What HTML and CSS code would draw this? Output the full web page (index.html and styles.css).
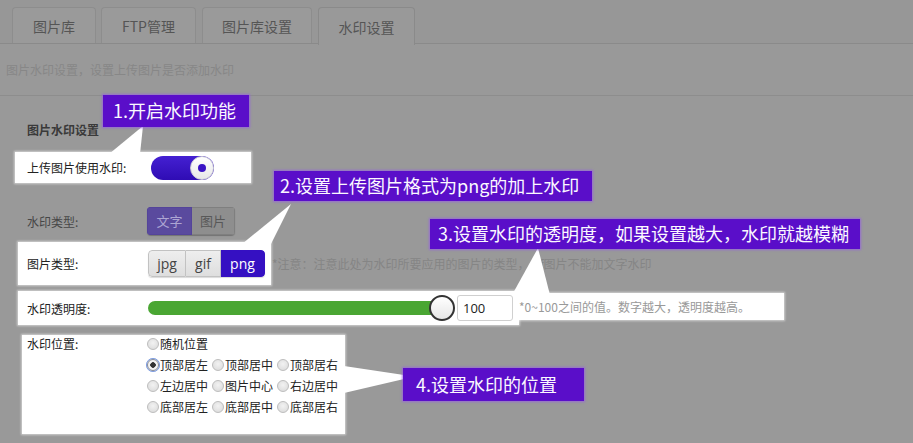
FILE: index.html
```html
<!DOCTYPE html>
<html lang="zh-CN">
<head>
<meta charset="utf-8">
<title>水印设置</title>
<link rel="stylesheet" href="styles.css">
</head>
<body>
<div class="tabs">
  <div class="tab t1">图片库</div>
  <div class="tab t2">FTP管理</div>
  <div class="tab t3">图片库设置</div>
  <div class="tab t4 active">水印设置</div>
</div>
<div class="desc">图片水印设置，设置上传图片是否添加水印</div>

<div class="form">
  <div class="title">图片水印设置</div>

  <div class="line l1">
    <div class="box hl">
      <div class="label">上传图片使用水印:</div>
      <div class="switch"><span class="knob"><span class="dot"></span></span></div>
    </div>
  </div>

  <div class="line l2">
    <div class="box">
      <div class="label dim">水印类型:</div>
      <div class="seg dimseg">
        <span class="sbtn on">文字</span><span class="sbtn">图片</span>
      </div>
    </div>
  </div>

  <div class="line l3">
    <div class="box hl">
      <div class="label">图片类型:</div>
      <div class="seg light">
        <span class="lbtn b-jpg">jpg</span><span class="lbtn b-gif">gif</span><span class="lbtn b-png on">png</span>
      </div>
    </div>
    <div class="note">*注意：注意此处为水印所要应用的图片的类型，gif图片不能加文字水印</div>
  </div>

  <div class="line l4">
    <div class="box hl">
      <div class="label">水印透明度:</div>
      <div class="slider"><span class="track"></span><span class="thumb"></span></div>
      <div class="num">100</div>
    </div>
    <div class="hint hl">*0~100之间的值。数字越大，透明度越高。</div>
  </div>

  <div class="line l5">
    <div class="box hl">
      <div class="label">水印位置:</div>
      <div class="radios">
        <div class="rrow"><span class="ritem"><i class="radio"></i>随机位置</span></div>
        <div class="rrow"><span class="ritem"><i class="radio checked"></i>顶部居左</span><span class="ritem"><i class="radio"></i>顶部居中</span><span class="ritem"><i class="radio"></i>顶部居右</span></div>
        <div class="rrow"><span class="ritem"><i class="radio"></i>左边居中</span><span class="ritem"><i class="radio"></i>图片中心</span><span class="ritem"><i class="radio"></i>右边居中</span></div>
        <div class="rrow"><span class="ritem"><i class="radio"></i>底部居左</span><span class="ritem"><i class="radio"></i>底部居中</span><span class="ritem"><i class="radio"></i>底部居右</span></div>
      </div>
    </div>
  </div>
</div>

<svg class="pointers" width="913" height="443" viewBox="0 0 913 443">
  <polygon points="143,126 109,154 140,154" fill="#fff"/>
  <polygon points="291,204 242,244 271,244" fill="#fff"/>
  <polygon points="538,248 512,295 550,295" fill="#fff"/>
  <polygon points="344,366 404,375 404,379 344,393" fill="#fff"/>
</svg>

<div class="callout c1">1.开启水印功能</div>
<div class="callout c2">2.设置上传图片格式为png的加上水印</div>
<div class="callout c3">3.设置水印的透明度，如果设置越大，水印就越模糊</div>
<div class="callout c4">4.设置水印的位置</div>
</body>
</html>
```

FILE: styles.css
```css
html, body {
  margin: 0;
  padding: 0;
}
body {
  position: relative;
  width: 913px;
  height: 443px;
  overflow: hidden;
  background: #999999;
  font-family: "Noto Sans CJK SC", "Microsoft YaHei", sans-serif;
  font-size: 12px;
  color: #222;
}

/* tabs */
.tabs {
  display: flex;
  align-items: flex-start;
  gap: 6px;
  padding: 7px 0 0 12px;
  height: 36px;
  background: #979797;
  border-bottom: 1px solid #8a8a8a;
}
.tab {
  box-sizing: border-box;
  height: 36px;
  border: 1px solid #8d8d8d;
  border-bottom: none;
  border-radius: 4px 4px 0 0;
  background: #9a9a9a;
  color: #555;
  font-size: 14px;
  display: flex;
  align-items: center;
  justify-content: center;
}
.t1 { width: 84px; }
.t2 { width: 95px; margin-left: -1px; }
.t3 { width: 110px; }
.t4 { width: 97px; }
.tab.active {
  height: 38px;
  margin-bottom: -1px;
  background: #999999;
  border-color: #8a8a8a;
}

.desc {
  height: 51px;
  line-height: 51px;
  padding-left: 6px;
  color: #878787;
  border-bottom: 1px solid #8d8d8d;
}

/* form */
.form {
  padding-top: 26px;
}
.title {
  padding-left: 27px;
  font-weight: bold;
  line-height: 16px;
  color: #3a3a3a;
}
.line {
  display: flex;
  align-items: center;
}
.box {
  --x: 15px;
  box-sizing: border-box;
  margin-left: var(--x);
  display: flex;
  align-items: center;
}
.hl {
  background: #fff;
  box-shadow: 0 0 2px 1px rgba(255, 255, 255, 0.55);
}
.label {
  box-sizing: border-box;
  width: calc(147px - var(--x));
  padding-left: calc(27px - var(--x));
  color: #222;
  white-space: nowrap;
}
.label.dim { color: #474747; }

/* row 1 */
.l1 { margin-top: 14px; }
.l1 .box { width: 236px; height: 31px; }
.switch {
  margin-left: 4px;
  width: 63px;
  height: 24px;
  border-radius: 12px;
  background: linear-gradient(to bottom, #4420d2, #2f0cb4);
  display: flex;
  justify-content: flex-end;
  align-items: center;
}
.knob {
  box-sizing: border-box;
  width: 24px;
  height: 24px;
  border-radius: 50%;
  background: linear-gradient(#ffffff, #e8e8e8);
  border: 1px solid #c9c9d4;
  display: flex;
  align-items: center;
  justify-content: center;
}
.dot {
  width: 8px;
  height: 8px;
  border-radius: 50%;
  background: #3a14c4;
}

/* row 2 */
.l2 { margin-top: 20px; }
.l2 .box { height: 36px; }
.seg {
  display: flex;
  border-radius: 4px;
  overflow: hidden;
}
.dimseg {
  box-shadow: 0 1px 1px rgba(0, 0, 0, 0.25);
}
.sbtn {
  box-sizing: border-box;
  height: 28px;
  line-height: 26px;
  text-align: center;
  font-size: 13px;
  border: 1px solid #7f7f7f;
  background: #8e8e8e;
  color: #585858;
}
.sbtn.on {
  width: 45px;
  background: #5a4a9e;
  border-color: #54449a;
  color: #ada5d3;
}
.sbtn:not(.on) { width: 43px; border-left: none; }

/* row 3 */
.l3 { margin-top: 3px; }
.l3 .box { --x: 18px; width: 253px; height: 43px; }
.light {
  margin-left: 1px;
  box-shadow: 0 1px 1px rgba(0, 0, 0, 0.15);
}
.lbtn {
  box-sizing: border-box;
  height: 27px;
  line-height: 25px;
  text-align: center;
  font-family: "Open Sans", "Noto Sans", sans-serif;
  font-size: 14px;
  color: #444;
  background: linear-gradient(#eeeeee, #dedede);
  border: 1px solid #c2c2c2;
}
.b-jpg { width: 38px; border-radius: 4px 0 0 4px; }
.b-gif { width: 35px; border-left: none; }
.b-png { width: 44px; border-left: none; border-radius: 0 4px 4px 0; }
.lbtn.on {
  background: #3510c2;
  border-color: #3510c2;
  color: #fff;
}
.note {
  margin-left: 1px;
  color: #858585;
  white-space: nowrap;
}

/* row 4 */
.l4 { margin-top: 6px; align-items: flex-start; }
.l4 .box { --x: 18px; width: 501px; height: 34px; }
.slider {
  position: relative;
  margin-left: 1px;
  width: 307px;
  height: 26px;
  display: flex;
  align-items: center;
}
.track {
  width: 297px;
  height: 14px;
  border-radius: 7px;
  background: #4aa633;
}
.thumb {
  position: absolute;
  right: 0;
  top: 0;
  box-sizing: border-box;
  width: 26px;
  height: 26px;
  border-radius: 50%;
  border: 2px solid #333;
  background: linear-gradient(#ffffff, #e6e6e6);
}
.num {
  box-sizing: border-box;
  margin-left: 2px;
  width: 56px;
  height: 26px;
  line-height: 24px;
  padding-left: 5px;
  border: 1px solid #cfcfcf;
  border-radius: 3px;
  font-family: "Open Sans", "Noto Sans", sans-serif;
  font-size: 13px;
  color: #222;
  background: #fff;
}
.hint {
  box-sizing: border-box;
  margin-top: 2px;
  margin-left: -4px;
  width: 269px;
  height: 27px;
  line-height: 27px;
  padding-left: 4px;
  color: #999;
  font-size: 12px;
  white-space: nowrap;
}

/* row 5 */
.l5 { margin-top: 10px; }
.l5 .box {
  --x: 22px;
  width: 323px;
  height: 99px;
  align-items: flex-start;
  padding-top: 1px;
}
.l5 .label { line-height: 16px; }
.radios {
  margin-top: -3px;
}
.rrow {
  display: flex;
  height: 21px;
  align-items: center;
}
.ritem {
  width: 65px;
  display: flex;
  align-items: center;
  color: #222;
  white-space: nowrap;
}
.radio {
  box-sizing: border-box;
  width: 12px;
  height: 12px;
  margin-right: 1px;
  border-radius: 50%;
  border: 1px solid #bdbdbd;
  background: radial-gradient(circle at 50% 40%, #f2f2f2, #d8d8d8);
  position: relative;
}
.radio.checked {
  border-color: #8a8a8a;
  background: radial-gradient(circle, #333 0 2.5px, #f4f4f4 3px);
  outline: 1px solid #7d9ce0;
  outline-offset: 0;
  box-shadow: 0 0 0 1px #c8d6f2;
}

/* annotations overlay */
.pointers {
  position: absolute;
  left: 0;
  top: 0;
  pointer-events: none;
}
.callout {
  position: absolute;
  box-sizing: border-box;
  background: #5a0ec9;
  color: #fbf8ff;
  font-size: 18px;
  white-space: nowrap;
  box-shadow: 0 0 2px 1px rgba(150, 100, 225, 0.8);
}
.c1 { left: 103px; top: 95px; width: 146px; height: 32px; line-height: 31px; padding-left: 10px; }
.c2 { left: 274px; top: 171px; width: 318px; height: 30px; line-height: 29px; padding-left: 6px; }
.c3 { left: 430px; top: 219px; width: 430px; height: 30px; line-height: 29px; padding-left: 8px; }
.c4 { left: 403px; top: 368px; width: 181px; height: 33px; line-height: 32px; padding-left: 13px; }
```
